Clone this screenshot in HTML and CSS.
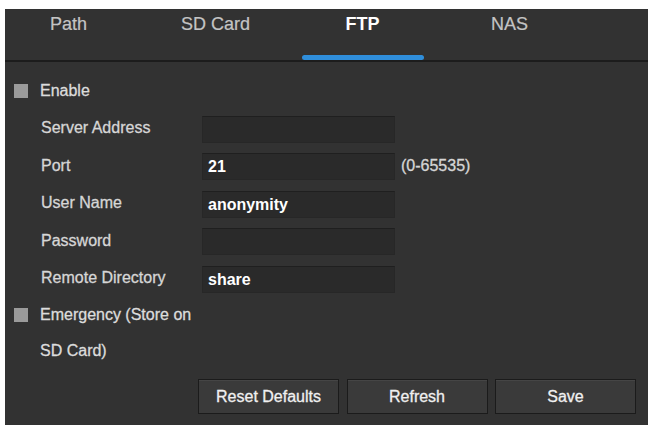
FILE: index.html
```html
<!DOCTYPE html>
<html>
<head>
<meta charset="utf-8">
<link rel="stylesheet" href="styles.css">
</head>
<body>
<div class="panel">
  <div class="tabs">
    <div class="tab"><span class="tab-label">Path</span></div>
    <div class="tab"><span class="tab-label">SD Card</span></div>
    <div class="tab active"><span class="tab-label">FTP</span><span class="underline"></span></div>
    <div class="tab"><span class="tab-label">NAS</span></div>
  </div>
  <div class="form">
    <div class="row check-row">
      <span class="checkbox"></span>
      <span class="check-label">Enable</span>
    </div>
    <div class="row">
      <span class="label">Server Address</span>
      <span class="input"></span>
    </div>
    <div class="row">
      <span class="label">Port</span>
      <span class="input">21</span>
      <span class="hint">(0-65535)</span>
    </div>
    <div class="row">
      <span class="label">User Name</span>
      <span class="input">anonymity</span>
    </div>
    <div class="row">
      <span class="label">Password</span>
      <span class="input"></span>
    </div>
    <div class="row">
      <span class="label">Remote Directory</span>
      <span class="input">share</span>
    </div>
    <div class="emergency">
      <span class="checkbox"></span>
      <span class="check-label wrap">Emergency (Store on SD Card)</span>
    </div>
    <div class="buttons">
      <button class="btn">Reset Defaults</button>
      <button class="btn">Refresh</button>
      <button class="btn">Save</button>
    </div>
  </div>
</div>
</body>
</html>
```
FILE: styles.css
```css
html, body {
  margin: 0;
  padding: 0;
  background: #ffffff;
}
body {
  font-family: "Liberation Sans", Arial, sans-serif;
  width: 648px;
  height: 425px;
  overflow: hidden;
}
.panel {
  margin: 9px 0 0 5px;
  width: 643px;
  height: 416px;
  background: #323232;
  box-sizing: border-box;
}
.tabs {
  display: flex;
  gap: 20px;
  height: 51px;
  border-bottom: 2px solid #1c1c1c;
}
.tab {
  width: 127px;
  height: 51px;
  display: flex;
  flex-direction: column;
  align-items: center;
  justify-content: space-between;
}
.tab-label {
  padding-top: 5px;
  line-height: 21px;
  font-size: 18px;
  color: #c4c4c4;
  -webkit-text-stroke: 0.2px #c4c4c4;
}
.tab.active .tab-label {
  color: #ffffff;
  font-weight: bold;
  -webkit-text-stroke: 0;
}
.underline {
  width: 122px;
  height: 5px;
  border-radius: 3px;
  background: #2f8edb;
}
.form {
  padding-top: 10px;
}
.row {
  display: flex;
  align-items: center;
  height: 37.5px;
}
.check-row {
  padding-left: 9px;
}
.checkbox {
  width: 14px;
  height: 14px;
  background: #9b9b9b;
  flex: none;
}
.check-label {
  margin-left: 12px;
  font-size: 16px;
  color: #dcdcdc;
  -webkit-text-stroke: 0.3px #dcdcdc;
}
.label {
  width: 161px;
  padding-left: 36px;
  font-size: 16px;
  color: #d6d6d6;
  -webkit-text-stroke: 0.3px #d6d6d6;
  flex: none;
}
.input {
  width: 193px;
  height: 27px;
  box-sizing: border-box;
  background: #2a2a2a;
  border: 1px solid #272727;
  border-top-color: #1f1f1f;
  padding-left: 5px;
  margin-top: 2px;
  font-size: 16px;
  font-weight: bold;
  line-height: 25px;
  color: #ffffff;
}
.hint {
  margin-left: 6px;
  font-size: 16px;
  color: #d6d6d6;
  -webkit-text-stroke: 0.3px #d6d6d6;
}
.emergency {
  display: flex;
  align-items: flex-start;
  padding-left: 9px;
}
.emergency .checkbox {
  margin-top: 11px;
}
.wrap {
  width: 165px;
  line-height: 36px;
}
.buttons {
  display: flex;
  gap: 7.5px;
  padding-left: 193px;
  margin-top: 10px;
}
.btn {
  width: 141px;
  height: 35px;
  background: #3a3a3a;
  border: 1px solid #1b1b1b;
  box-shadow: inset 0 1px 0 #454545;
  color: #f0f0f0;
  font-family: "Liberation Sans", Arial, sans-serif;
  font-size: 16px;
  -webkit-text-stroke: 0.3px #f0f0f0;
  padding: 0;
}
```
